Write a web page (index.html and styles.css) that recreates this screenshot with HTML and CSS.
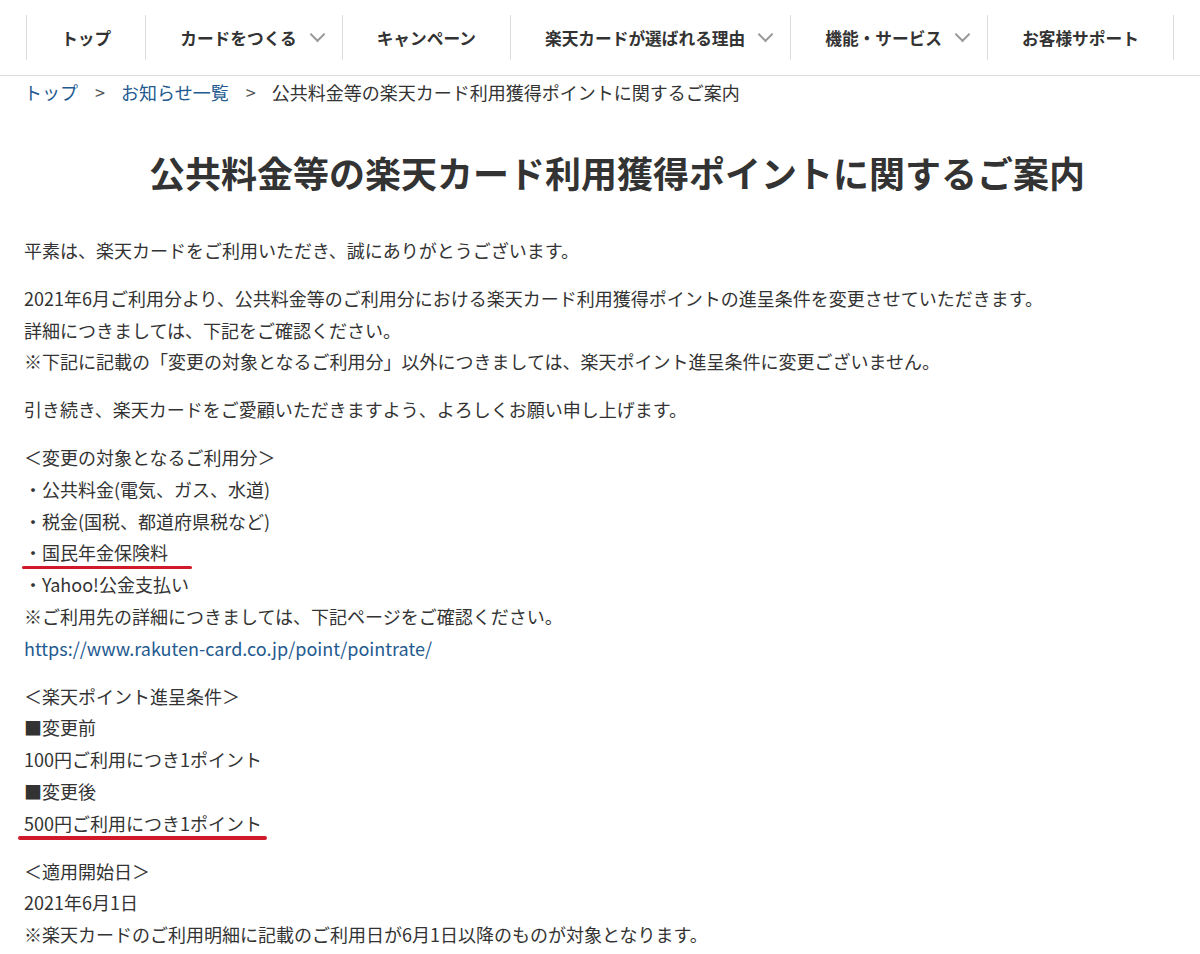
FILE: index.html
```html
<!DOCTYPE html>
<html lang="ja">
<head>
    <meta charset="UTF-8">
    <meta name="viewport" content="width=device-width, initial-scale=1.0">
    <title>公共料金等の楽天カード利用獲得ポイントに関するご案内</title>
    <link rel="stylesheet" href="styles.css">
</head>
<body>
    <header class="gnav">
        <ul class="gnav-list">
            <li class="gnav-item">トップ</li>
            <li class="gnav-item has-sub">カードをつくる<span class="chev"></span></li>
            <li class="gnav-item">キャンペーン</li>
            <li class="gnav-item has-sub">楽天カードが選ばれる理由<span class="chev"></span></li>
            <li class="gnav-item has-sub">機能・サービス<span class="chev"></span></li>
            <li class="gnav-item">お客様サポート</li>
        </ul>
    </header>

    <div class="container">
        <nav class="breadcrumb">
            <a href="#">トップ</a><span class="sep">&gt;</span><a href="#">お知らせ一覧</a><span class="sep">&gt;</span><span>公共料金等の楽天カード利用獲得ポイントに関するご案内</span>
        </nav>

        <h1>公共料金等の楽天カード利用獲得ポイントに関するご案内</h1>

        <p>平素は、楽天カードをご利用いただき、誠にありがとうございます。</p>
        <p>2021年6月ご利用分より、公共料金等のご利用分における楽天カード利用獲得ポイントの進呈条件を変更させていただきます。<br>
        詳細につきましては、下記をご確認ください。<br>
        ※下記に記載の「変更の対象となるご利用分」以外につきましては、楽天ポイント進呈条件に変更ございません。</p>
        <p>引き続き、楽天カードをご愛顧いただきますよう、よろしくお願い申し上げます。</p>
        <p>＜変更の対象となるご利用分＞<br>
        ・公共料金(電気、ガス、水道)<br>
        ・税金(国税、都道府県税など)<br>
        <span class="mark mark-a">・国民年金保険料</span><br>
        ・Yahoo!公金支払い<br>
        ※ご利用先の詳細につきましては、下記ページをご確認ください。<br>
        <a href="#">https://www.rakuten-card.co.jp/point/pointrate/</a></p>
        <p>＜楽天ポイント進呈条件＞<br>
        ■変更前<br>
        100円ご利用につき1ポイント<br>
        ■変更後<br>
        <span class="mark mark-b">500円ご利用につき1ポイント</span></p>
        <p>＜適用開始日＞<br>
        2021年6月1日<br>
        ※楽天カードのご利用明細に記載のご利用日が6月1日以降のものが対象となります。</p>
    </div>
</body>
</html>
```

FILE: styles.css
```css
body { margin: 0; font-family: "Noto Sans CJK JP", "Noto Sans", sans-serif; color: #333; background: #fff; }
a { color: #235a8f; text-decoration: none; }

/* global nav */
.gnav { border-bottom: 1px solid #dcdcdc; padding: 15px 0 15px; }
.gnav-list { display: flex; justify-content: center; margin: 0; padding: 0; list-style: none; }
.gnav-item { display: flex; align-items: center; height: 45px; padding: 0 34px; border-left: 1px solid #dcdcdc; font-size: 16.7px; font-weight: bold; color: #333; }
.gnav-item:last-child { border-right: 1px solid #dcdcdc; }
.gnav-item.has-sub { padding-right: 19px; }
.chev { display: inline-block; width: 9px; height: 9px; margin: -6px 0 0 15px; border-right: 2px solid #999; border-bottom: 2px solid #999; transform: rotate(45deg); }

.container { padding: 0 24px; }

.breadcrumb { font-size: 18px; line-height: 33px; margin-top: 0; }
.breadcrumb .sep { margin: 0 16px 0 17px; color: #555; }

h1 { font-size: 36px; line-height: 54px; text-align: center; margin: 36px 0 36px; padding-left: 34px; color: #333; }

p { font-size: 18px; line-height: 31.8px; margin: 0 0 16px; }

.mark { position: relative; }
.mark::after { content: ""; position: absolute; bottom: -4px; height: 3.5px; border-radius: 2px; background: #d01a2a; }
.mark-a::after { left: -2px; right: -24px; }
.mark-b::after { left: -6px; right: -5px; }
```
